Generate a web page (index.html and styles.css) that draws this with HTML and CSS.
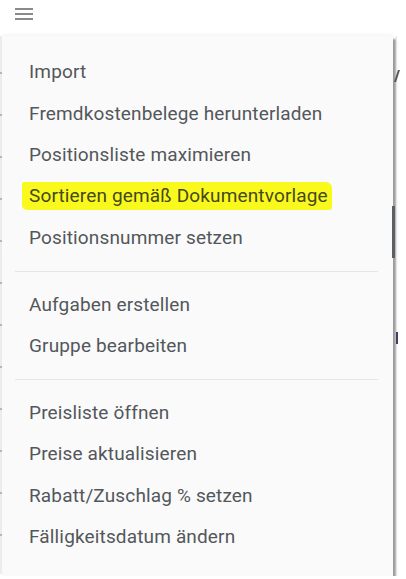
FILE: index.html
```html
<!DOCTYPE html>
<html lang="de">
<head>
    <meta charset="UTF-8">
    <meta name="viewport" content="width=device-width, initial-scale=1.0">
    <title>Positionen Menü</title>
    <link rel="stylesheet" href="styles.css">
</head>
<body>
    <div class="topbar">
        <button class="menu-toggle" aria-label="Menü">
            <svg width="18" height="14" viewBox="0 0 18 14">
                <rect x="0" y="1" width="18" height="2" fill="#8a8a8a"/>
                <rect x="0" y="6" width="18" height="2" fill="#8a8a8a"/>
                <rect x="0" y="11" width="18" height="2" fill="#8a8a8a"/>
            </svg>
        </button>
    </div>

    <div class="stage">
        <div class="table-edge left"></div>
        <ul class="menu">
            <li class="menu-item">Import</li>
            <li class="menu-item">Fremdkostenbelege herunterladen</li>
            <li class="menu-item">Positionsliste maximieren</li>
            <li class="menu-item"><span class="marker">Sortieren gemäß Dokumentvorlage</span></li>
            <li class="menu-item">Positionsnummer setzen</li>
            <li class="divider"></li>
            <li class="menu-item">Aufgaben erstellen</li>
            <li class="menu-item">Gruppe bearbeiten</li>
            <li class="divider"></li>
            <li class="menu-item">Preisliste öffnen</li>
            <li class="menu-item">Preise aktualisieren</li>
            <li class="menu-item">Rabatt/Zuschlag % setzen</li>
            <li class="menu-item">Fälligkeitsdatum ändern</li>
        </ul>
        <div class="table-edge right">
            <span class="tick slash"></span>
            <span class="tick block"></span>
            <span class="tick mark"></span>
        </div>
    </div>
</body>
</html>
```

FILE: styles.css
```css
body {
    margin: 0;
    background-color: #ffffff;
    font-family: Roboto, 'Noto Sans', sans-serif;
    color: #53575b;
}

.topbar {
    height: 36px;
    display: flex;
    align-items: flex-start;
}

.menu-toggle {
    border: none;
    background: none;
    padding: 0;
    margin: 7px 0 0 15px;
    width: 18px;
    height: 14px;
    cursor: pointer;
}

.stage {
    display: flex;
    align-items: flex-start;
}

.table-edge {
    position: relative;
    width: 2px;
    height: 538px;
}

.table-edge.left {
    background: repeating-linear-gradient(to bottom, #e2e2e2 0, #e2e2e2 36px, #8a8a8a 36px, #8a8a8a 38px, #e2e2e2 38px, #e2e2e2 42px);
    opacity: 0.6;
}

.table-edge.right {
    flex: 1;
    border-left: 1px solid #e4e4e4;
    margin-left: 3px;
}

.tick {
    position: absolute;
    left: -1px;
}

.tick.slash {
    top: 34px;
    width: 2px;
    height: 12px;
    background: #555;
    transform: skewX(-18deg);
}

.tick.block {
    top: 170px;
    width: 3px;
    height: 52px;
    left: -5px;
    background: #5c5f62;
}

.tick.mark {
    top: 296px;
    width: 2px;
    height: 12px;
    background: #3c3f6a;
}

.menu {
    list-style: none;
    margin: 0;
    padding: 15px 0 18px;
    width: 391px;
    background-color: #fafafa;
    box-shadow: 3px 3px 2px rgba(0, 0, 0, 0.38), 0 -1px 4px rgba(0, 0, 0, 0.06);
}

.menu-item {
    height: 41.5px;
    display: flex;
    align-items: center;
    padding-left: 27px;
    font-size: 19px;
    letter-spacing: 0.15px;
    cursor: pointer;
}

.marker {
    background-color: #f9f91e;
    margin-left: -7px;
    padding: 2px 4px 3px 7px;
    border-radius: 2px 6px 3px 5px;
    color: #46481c;
}

.divider {
    height: 1px;
    background-color: #e6e6e6;
    margin: 12px 15px 12px 13px;
}
```
